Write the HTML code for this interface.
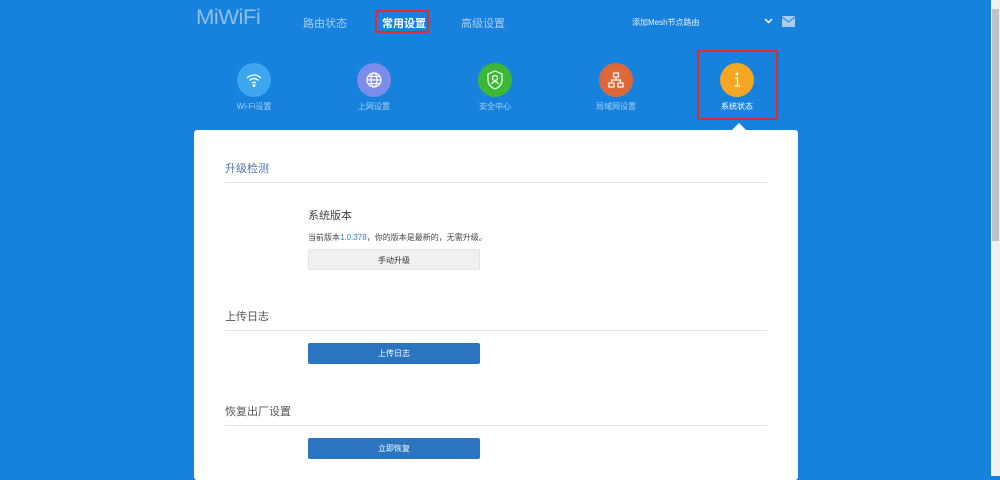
<!DOCTYPE html><html><head><meta charset="utf-8"><style>
*{margin:0;padding:0;box-sizing:border-box}
body{width:1000px;height:476px;overflow:hidden;background:#1682de;font-family:"Liberation Sans","Noto Sans CJK SC",sans-serif;position:relative}
.a{position:absolute}
.nav{color:#a9cdf0;font-size:11px;top:15px}
.ic{width:34px;height:34px;border-radius:50%;top:63px}
.lb{color:#a9cdf0;font-size:8px;top:101px;width:100px;text-align:center}
.h{left:225px;font-size:11px;color:#555}
.ln{left:225px;width:542px;height:1px;background:#e3e3e3}
.btn{left:308px;width:172px;height:21px;border-radius:2px;font-size:8px;text-align:center;line-height:21px}
.bb{background:#2a74c0;color:#fff}
</style></head><body>
<div class="a" style="left:196px;top:6px;color:#8fbfec;font-size:21px;font-weight:300;letter-spacing:-0.5px;transform:scaleX(1.05);transform-origin:left">MiWiFi</div>
<div class="a nav" style="left:303px">路由状态</div>
<div class="a" style="left:375px;top:10px;width:54px;height:23px;border:2px solid #e8262b;border-radius:2px"></div>
<div class="a nav" style="left:382px;color:#fff;font-weight:bold">常用设置</div>
<div class="a nav" style="left:461px">高级设置</div>
<div class="a" style="left:632px;top:17px;color:#e6f1fb;font-size:8px">添加Mesh节点路由</div>
<svg class="a" style="left:764px;top:18px" width="9" height="6"><path d="M1 1 L4.5 4.5 L8 1" stroke="#fff" stroke-width="1.5" fill="none"/></svg>
<svg class="a" style="left:782px;top:16px" width="13" height="11"><rect width="13" height="11" fill="#a9cdf0"/><path d="M0 1 L6.5 6 L13 1" stroke="#1682de" fill="none"/></svg>
<div class="a" style="left:991px;top:0;width:9px;height:476px;background:#f0f0f0"></div>
<div class="a" style="left:992px;top:9px;width:7px;height:232px;background:#c1c1c1"></div>

<div class="a ic" style="left:237px;background:#3ea6ee"></div>
<svg class="a" style="left:245px;top:71px" width="18" height="18" fill="none" stroke="#fff" stroke-width="1.3"><path d="M2 7 Q9 1 16 7"/><path d="M4.5 9.5 Q9 5.5 13.5 9.5"/><path d="M7 12 Q9 10.5 11 12"/><circle cx="9" cy="14.5" r="0.8" fill="#fff"/></svg>
<div class="a ic" style="left:357px;background:#7c8cea"></div>
<svg class="a" style="left:365px;top:71px" width="18" height="18" fill="none" stroke="#fff" stroke-width="1.2"><circle cx="9" cy="9" r="7"/><ellipse cx="9" cy="9" rx="3" ry="7"/><path d="M2 9H16M3 5.5H15M3 12.5H15"/></svg>
<div class="a ic" style="left:478px;background:#3cb837"></div>
<svg class="a" style="left:486px;top:70px" width="18" height="20" fill="none" stroke="#fff" stroke-width="1.2"><path d="M9 1 L16 4 V10 Q16 16 9 19 Q2 16 2 10 V4 Z"/><circle cx="9" cy="8" r="2.5"/><path d="M5.5 14 Q9 9 12.5 14"/></svg>
<div class="a ic" style="left:599px;background:#e0693a"></div>
<svg class="a" style="left:607px;top:71px" width="18" height="18" fill="none" stroke="#fff" stroke-width="1.2"><rect x="6.5" y="2" width="5" height="4"/><rect x="2" y="12" width="5" height="4"/><rect x="11" y="12" width="5" height="4"/><path d="M9 6V9M4.5 12V9H13.5V12"/></svg>
<div class="a ic" style="left:720px;background:#f5a623"></div>
<svg class="a" style="left:728px;top:71px" width="18" height="18" fill="none" stroke="#fff" stroke-width="1.2"><circle cx="9" cy="3" r="0.8" fill="#fff"/><path d="M7 7H9.5V15M6.5 15H12"/></svg>
<div class="a lb" style="left:204px">Wi-Fi设置</div>
<div class="a lb" style="left:324px">上网设置</div>
<div class="a lb" style="left:445px">安全中心</div>
<div class="a lb" style="left:566px">局域网设置</div>
<div class="a lb" style="left:687px;color:#fff">系统状态</div>
<div class="a" style="left:697px;top:50px;width:81px;height:70px;border:2px solid #e8262b;border-radius:2px"></div>

<div class="a" style="left:194px;top:130px;width:604px;height:350px;background:#fff;border-radius:3px"></div>
<div class="a" style="left:732px;top:123px;width:0;height:0;border-left:7px solid transparent;border-right:7px solid transparent;border-bottom:7px solid #fff"></div>

<div class="a h" style="top:160px;color:#4a76ad">升级检测</div>
<div class="a ln" style="top:182px"></div>
<div class="a" style="left:308px;top:207px;font-size:11px;color:#444">系统版本</div>
<div class="a" style="left:308px;top:232px;font-size:8px;color:#444">当前版本<span style="color:#3a7dd0">1.0.378</span>，你的版本是最新的，无需升级。</div>
<div class="a btn" style="top:249px;background:#f0f0f0;border:1px solid #e4e4e4;color:#333">手动升级</div>
<div class="a h" style="top:308px">上传日志</div>
<div class="a ln" style="top:330px"></div>
<div class="a btn bb" style="top:343px">上传日志</div>
<div class="a h" style="top:403px">恢复出厂设置</div>
<div class="a ln" style="top:425px"></div>
<div class="a btn bb" style="top:438px">立即恢复</div>
</body></html>
